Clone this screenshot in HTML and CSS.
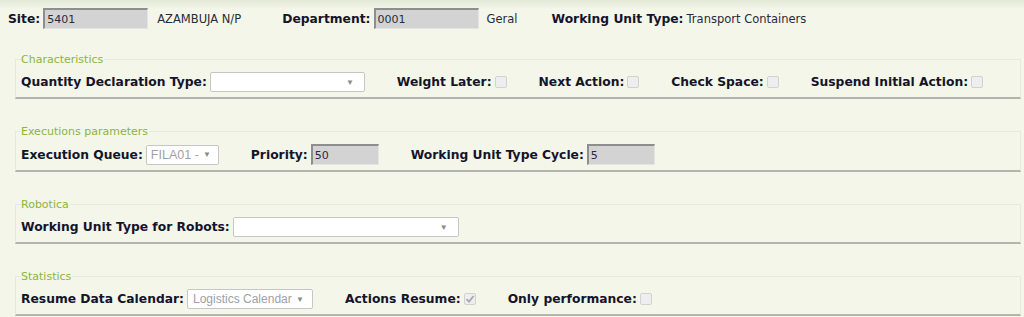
FILE: index.html
```html
<!DOCTYPE html>
<html>
<head>
    <title>Working Unit Type</title>
    <link rel="stylesheet" href="styles.css">
</head>
<body>
    <div class="header-row">
        <label class="lbl">Site:</label>
        <input class="ro-input" type="text" value="5401" readonly>
        <span class="desc site-desc">AZAMBUJA N/P</span>
        <label class="lbl">Department:</label>
        <input class="ro-input" type="text" value="0001" readonly>
        <span class="desc dept-desc">Geral</span>
        <label class="lbl">Working Unit Type:</label>
        <span class="desc wut-desc">Transport Containers</span>
    </div>

    <fieldset class="group">
        <legend>Characteristics</legend>
        <div class="row">
            <div class="field">
                <span class="lbl">Quantity Declaration Type:</span>
                <div class="select w-qty"><span class="sel-text"></span><span class="arrow">&#9660;</span></div>
            </div>
            <div class="field">
                <span class="lbl">Weight Later:</span>
                <span class="check"></span>
            </div>
            <div class="field">
                <span class="lbl">Next Action:</span>
                <span class="check"></span>
            </div>
            <div class="field">
                <span class="lbl">Check Space:</span>
                <span class="check"></span>
            </div>
            <div class="field">
                <span class="lbl">Suspend Initial Action:</span>
                <span class="check"></span>
            </div>
        </div>
    </fieldset>

    <fieldset class="group">
        <legend>Executions parameters</legend>
        <div class="row">
            <div class="field">
                <span class="lbl">Execution Queue:</span>
                <div class="select disabled w-queue"><span class="sel-text">FILA01 -</span><span class="arrow">&#9660;</span></div>
            </div>
            <div class="field">
                <span class="lbl">Priority:</span>
                <input class="ro-input short" type="text" value="50" readonly>
            </div>
            <div class="field">
                <span class="lbl">Working Unit Type Cycle:</span>
                <input class="ro-input short" type="text" value="5" readonly>
            </div>
        </div>
    </fieldset>

    <fieldset class="group">
        <legend>Robotica</legend>
        <div class="row">
            <div class="field">
                <span class="lbl">Working Unit Type for Robots:</span>
                <div class="select w-robots"><span class="sel-text"></span><span class="arrow">&#9660;</span></div>
            </div>
        </div>
    </fieldset>

    <fieldset class="group">
        <legend>Statistics</legend>
        <div class="row">
            <div class="field">
                <span class="lbl">Resume Data Calendar:</span>
                <div class="select disabled w-calendar"><span class="sel-text">Logistics Calendar</span><span class="arrow">&#9660;</span></div>
            </div>
            <div class="field">
                <span class="lbl">Actions Resume:</span>
                <span class="check checked">
                    <svg width="10" height="10" viewBox="0 0 10 10"><path d="M1.5 5.2 L4 7.6 L8.6 2" fill="none" stroke="#a9a9a9" stroke-width="1.8"/></svg>
                </span>
            </div>
            <div class="field">
                <span class="lbl">Only performance:</span>
                <span class="check"></span>
            </div>
        </div>
    </fieldset>
</body>
</html>
```

FILE: styles.css
```css
body { margin: 0; padding: 0; background: #f3f6e9 linear-gradient(#e3e8d8, #f3f6e9 9px) no-repeat; font-family: "DejaVu Sans", Verdana, sans-serif; color: #1b1b2b; height: 317px; overflow: hidden; }
.header-row { display: flex; align-items: center; padding: 8px 0 0 8px; height: 21px; }
.lbl { font-weight: bold; font-size: 12.3px; color: #14142a; white-space: nowrap; }
.desc { font-size: 11.5px; color: #2a2a3a; white-space: nowrap; }
.site-desc { margin-left: 9px; width: 125px; }
.dept-desc { margin-left: 8px; width: 65px; }
.wut-desc { margin-left: 3px; }
.ro-input { width: 105px; height: 21px; box-sizing: border-box; margin: 0 0 0 3px; padding: 1px 2px 0; background: #d3d3d3; border: 1px solid; border-color: #8e8e8e #e4e4e4 #e4e4e4 #8e8e8e; border-width: 2px 1px 1px 2px; font-family: "DejaVu Sans", Tahoma, sans-serif; font-size: 11px; color: #2a2a3a; outline: none; }
.ro-input.short { width: 68px; }
.group { margin: 24px 3px 0 15px; padding: 6px 6px 5px 5px; border: 1px solid #e6eadb; border-bottom: 2px solid #b4b4ad; }
.group + .group { margin-top: 26px; }
legend { padding: 0 1px 0 0; font-size: 11px; color: #8db440; line-height: 13px; }
.row { display: flex; align-items: center; gap: 32px; min-height: 20px; }
.field { display: flex; align-items: center; }
.select { display: flex; align-items: center; justify-content: space-between; height: 20px; box-sizing: border-box; margin-left: 3px; padding: 0 10px 0 5px; background: #fff; border: 1px solid #c6c6c6; border-radius: 2px; font-family: "Liberation Sans", Arial, sans-serif; font-size: 12.5px; color: #222; white-space: nowrap; }
.select.disabled { color: #a0a0a8; }
.arrow { font-size: 8px; color: #8a8a8a; }
.w-qty { width: 155px; }
.w-queue { width: 73px; padding-left: 4px; padding-right: 7px; }
.w-robots { width: 226px; }
.w-calendar { width: 126px; padding-left: 5px; padding-right: 8px; font-size: 12px; }
.check { display: inline-flex; align-items: center; justify-content: center; width: 12px; height: 12px; box-sizing: border-box; margin-left: 3px; border: 1px solid #d2d2d2; border-radius: 2px; background: #eeeeee; }
```
